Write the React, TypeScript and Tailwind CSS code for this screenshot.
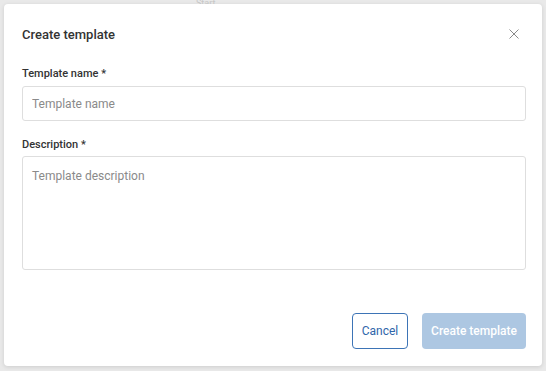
import React from "react";

export default function App() {
  return (
    <div
      className="relative w-[546px] h-[371px] bg-[#e9e9e9] overflow-hidden pt-[4px] pl-[4px]"
      style={{ fontFamily: "Roboto, 'Liberation Sans', sans-serif" }}
    >
      <div className="absolute left-[196px] top-[-2px] text-[9px] leading-[10px] text-[#c8c8c8]">Start</div>
      <div className="relative w-[538px] h-[362px] bg-white rounded-[4px] shadow-[0_1px_4px_rgba(0,0,0,0.12)] pl-[18px] pr-[16px] pt-[21px] flex flex-col">
        <div className="flex items-center justify-between h-[20px]">
          <div className="text-[13px] font-medium text-[#333]">Create template</div>
          <button className="w-[20px] h-[20px] flex items-center justify-center mr-[2px] mt-[-2px]">
            <svg width="10" height="10" viewBox="0 0 10 10" fill="none">
              <path d="M0.5 0.5L9.5 9.5M9.5 0.5L0.5 9.5" stroke="#8a8a8a" strokeWidth="1" />
            </svg>
          </button>
        </div>
        <label className="mt-[21px] text-[11px] font-medium text-[#333] leading-[16px]">Template name *</label>
        <input
          className="mt-[4px] h-[35px] w-full border border-[#dedede] rounded-[3px] px-[9px] text-[12px] text-[#333] placeholder:text-[#8a8a8a] outline-none"
          placeholder="Template name"
        />
        <label className="mt-[16px] text-[11px] font-medium text-[#333] leading-[16px]">Description *</label>
        <textarea
          className="mt-[3px] h-[114px] w-full border border-[#dedede] rounded-[3px] px-[9px] pt-[10px] text-[12px] text-[#333] placeholder:text-[#8a8a8a] outline-none resize-none"
          placeholder="Template description"
        />
        <div className="mt-[43px] flex justify-end gap-[14px]">
          <button className="h-[36px] w-[56px] border border-[#3d74b6] rounded-[4px] text-[12px] text-[#2f66aa] bg-white">
            Cancel
          </button>
          <button className="h-[36px] w-[104px] rounded-[4px] bg-[#adc7e2] text-[12px] font-medium text-white">
            Create template
          </button>
        </div>
      </div>
    </div>
  );
}
